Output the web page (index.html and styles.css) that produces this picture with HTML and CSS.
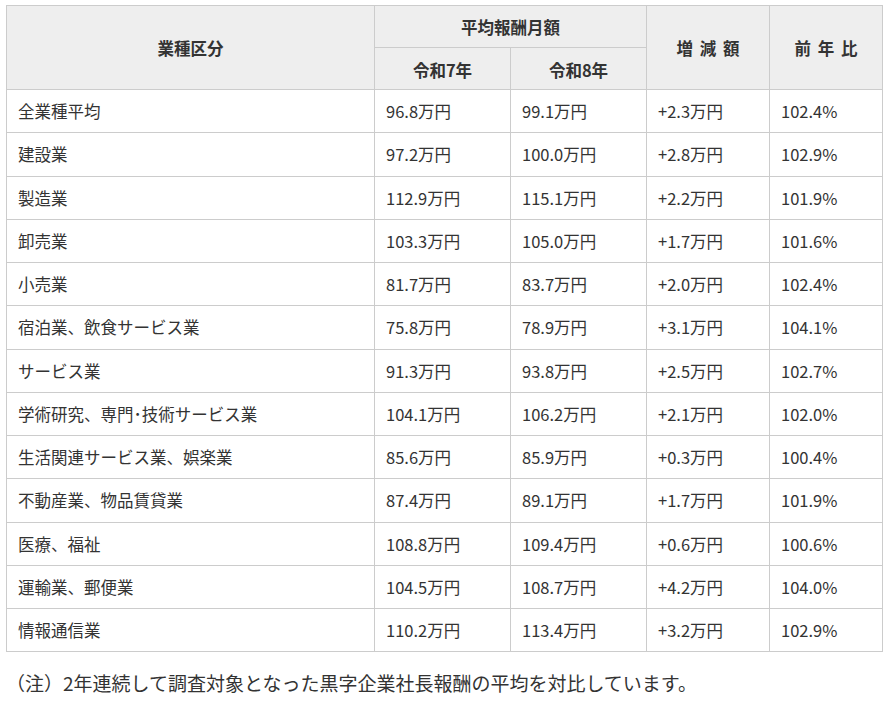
FILE: index.html
```html
<!DOCTYPE html>
<html lang="ja">
<head>
<meta charset="utf-8">
<link rel="stylesheet" href="styles.css">
</head>
<body>
<div class="wrap">
<table class="tbl">
<colgroup>
<col class="c1"><col class="c2"><col class="c3"><col class="c4"><col class="c5">
</colgroup>
<thead>
<tr class="h1">
<th rowspan="2">業種区分</th>
<th colspan="2">平均報酬月額</th>
<th rowspan="2" class="sp">増 減 額</th>
<th rowspan="2" class="sp">前 年 比</th>
</tr>
<tr class="h2">
<th>令和7年</th>
<th>令和8年</th>
</tr>
</thead>
<tbody>
<tr><td>全業種平均</td><td>96.8万円</td><td>99.1万円</td><td>+2.3万円</td><td>102.4%</td></tr>
<tr><td>建設業</td><td>97.2万円</td><td>100.0万円</td><td>+2.8万円</td><td>102.9%</td></tr>
<tr><td>製造業</td><td>112.9万円</td><td>115.1万円</td><td>+2.2万円</td><td>101.9%</td></tr>
<tr><td>卸売業</td><td>103.3万円</td><td>105.0万円</td><td>+1.7万円</td><td>101.6%</td></tr>
<tr><td>小売業</td><td>81.7万円</td><td>83.7万円</td><td>+2.0万円</td><td>102.4%</td></tr>
<tr><td>宿泊業、飲食サービス業</td><td>75.8万円</td><td>78.9万円</td><td>+3.1万円</td><td>104.1%</td></tr>
<tr><td>サービス業</td><td>91.3万円</td><td>93.8万円</td><td>+2.5万円</td><td>102.7%</td></tr>
<tr><td>学術研究、専門･技術サービス業</td><td>104.1万円</td><td>106.2万円</td><td>+2.1万円</td><td>102.0%</td></tr>
<tr><td>生活関連サービス業、娯楽業</td><td>85.6万円</td><td>85.9万円</td><td>+0.3万円</td><td>100.4%</td></tr>
<tr><td>不動産業、物品賃貸業</td><td>87.4万円</td><td>89.1万円</td><td>+1.7万円</td><td>101.9%</td></tr>
<tr><td>医療、福祉</td><td>108.8万円</td><td>109.4万円</td><td>+0.6万円</td><td>100.6%</td></tr>
<tr><td>運輸業、郵便業</td><td>104.5万円</td><td>108.7万円</td><td>+4.2万円</td><td>104.0%</td></tr>
<tr><td>情報通信業</td><td>110.2万円</td><td>113.4万円</td><td>+3.2万円</td><td>102.9%</td></tr>
</tbody>
</table>
<p class="note">（注）2年連続して調査対象となった黒字企業社長報酬の平均を対比しています。</p>
</div>
</body>
</html>
```
FILE: styles.css
```css
html, body {
  margin: 0;
  padding: 0;
  background: #fff;
}
body {
  font-family: "Noto Sans CJK JP", "Noto Sans", sans-serif;
  color: #333;
}
.wrap {
  padding: 5px 3px 0 6px;
}
.tbl {
  border-collapse: collapse;
  width: 876px;
  table-layout: fixed;
  font-size: 16.5px;
  line-height: 22px;
}
.c1 { width: 368px; }
.c2 { width: 136px; }
.c3 { width: 136px; }
.c4 { width: 123px; }
.c5 { width: 113px; }
.tbl th,
.tbl td {
  border: 1px solid #ccc;
}
.tbl th {
  background: #eee;
  font-weight: bold;
  text-align: center;
  padding: 0 4px;
  height: 41px;
}
.tbl .h2 th {
  padding-top: 3px;
  height: 38px;
}
.tbl td {
  padding: 0 11px;
  height: 42.25px;
  text-align: left;
}
.sp {
  word-spacing: 3px;
}
.note {
  margin: 17px 0 0 0;
  font-size: 19px;
  line-height: 28px;
}
```
